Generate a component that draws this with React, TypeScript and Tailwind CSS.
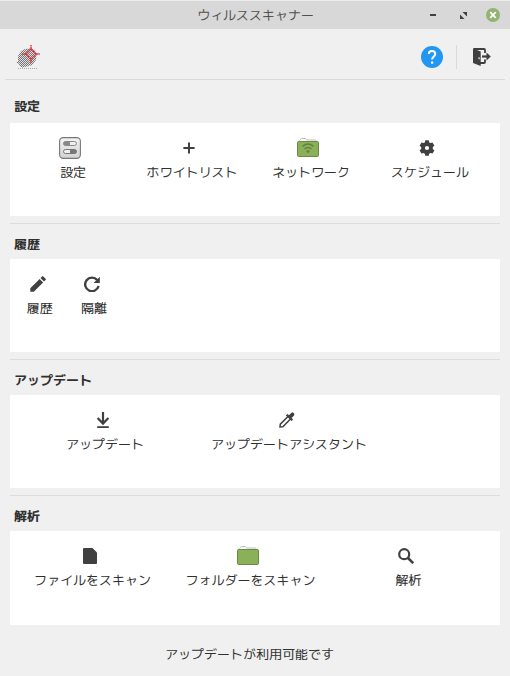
import type { ReactNode } from "react";

const Svg = ({ children, size = 16 }: { children: ReactNode; size?: number }) => (
  <svg width={size} height={size} viewBox={`0 0 ${size} ${size}`} fill="none" className="block shrink-0">
    {children}
  </svg>
);

const LogoIcon = () => (
  <Svg size={24}>
    <defs>
      <pattern id="checker" width="2" height="2" patternUnits="userSpaceOnUse">
        <path d="M0 0h1v1H0zM1 1h1v1H1z" fill="#777" shapeRendering="crispEdges" />
      </pattern>
    </defs>
    <path d="M5 6 9 4 14 3.5 19 5 20.5 10 20 15 16 20 11 21.5 6 22.5 4 21 2 18 0 18 2 16 2 11Z" fill="#dedede" />
    <path d="M5 6 9 4 14 3.5 19 5 20.5 10 20 15 16 20 11 21.5 6 22.5 4 21 2 18 0 18 2 16 2 11Z" fill="url(#checker)" />
    <path d="M2 23.5h19" stroke="#aaa" strokeDasharray="1 1" />
    <path d="m15 3.8 5.2 5.2-5.2 5.2L9.8 9Z" stroke="#e0303a" strokeWidth="1.4" strokeDasharray="2.4 .5" />
    <path d="M15 0v5M15 13v5M6 9h5M19 9h5" stroke="#e0303a" strokeWidth="1.4" strokeDasharray="1.6 .5" />
  </Svg>
);

const HelpIcon = () => (
  <Svg size={22}>
    <circle cx="11" cy="11" r="11" fill="#2196f3" />
    <path d="M7.8 8.1C7.8 6 9.1 4.9 11 4.9s3.2 1.2 3.2 3c0 2.5-3.1 2.7-3.1 5.6" stroke="#fff" strokeWidth="2" />
    <path d="M10 15.5h2.2v2.2H10z" fill="#fff" />
  </Svg>
);

const ExitIcon = () => (
  <Svg size={18}>
    <path d="M.5 1H11q1 0 1 1v3M12 11.5V14q0 1-1 1H7" stroke="#3f3f3f" strokeWidth="1.8" />
    <path d="M0 .5l7.7 3V18L0 15z" fill="#3f3f3f" />
    <path d="M9 8.5h6" stroke="#3f3f3f" strokeWidth="2.2" />
    <path d="m13.5 4.4 4.3 4.1-4.3 4.1z" fill="#3f3f3f" />
    <path d="M5.5 9.3h1.2v2H5.5z" fill="#eee" />
  </Svg>
);

const SwitchesIcon = () => (
  <Svg size={22}>
    <defs>
      <linearGradient id="plate" x2="0" y2="1">
        <stop stopColor="#f3f3f3" />
        <stop offset="1" stopColor="#d2d2d2" />
      </linearGradient>
    </defs>
    <rect x=".6" y=".6" width="20.8" height="20.8" rx="3.6" fill="url(#plate)" stroke="#777" strokeWidth="1.1" />
    <rect x="4.5" y="4.5" width="13" height="4" rx="2" fill="#eee" stroke="#888" />
    <path d="M6.5 4.5H11v4H6.5a2 2 0 0 1 0-4Z" fill="#888" />
    <rect x="4.5" y="12.5" width="13" height="4" rx="2" fill="#eee" stroke="#777" />
    <path d="M11 12.5h4.5a2 2 0 0 1 0 4H11Z" fill="#777" />
  </Svg>
);

const FolderIcon = ({ wifi = false }: { wifi?: boolean }) => (
  <Svg size={22}>
    <path d="M2.5 6V3.5l1-1V2l1-.5h4l1 1V3h9l1 1v2" fill="#fff" stroke="#bdbdbd" />
    <rect x=".5" y="4.5" width="21" height="15" rx="1.2" fill="#8bb158" stroke="#6b8846" />
    {wifi && (
      <>
        <path d="M5.5 9.3q5.5-4.4 11 0M7.5 12q3.5-2.8 7 0" stroke="#638040" strokeWidth="1.5" />
        <path d="m11 16.3-2-2.3q2-1.3 4 0z" fill="#638040" />
      </>
    )}
  </Svg>
);

const PlusIcon = () => (
  <Svg>
    <path d="M8 2.4v11.2M2.4 8h11.2" stroke="#404040" strokeWidth="2" />
  </Svg>
);

const GearIcon = () => (
  <Svg>
    <path
      fillRule="evenodd"
      d="M6.3.2h3.4l.5 2.2 1.2.7 2.1-.6 1.9 3.2L13.8 7v2l1.6 1.4-1.9 3.2-2.1-.6-1.2.7-.5 2.1H6.3l-.5-2.1-1.2-.7-2.1.6-1.9-3.2L2.2 9V7L.6 5.7l1.9-3.2 2.1.6 1.2-.7zM8 5.9a2.1 2.1 0 1 0 0 4.2 2.1 2.1 0 0 0 0-4.2Z"
      fill="#404040"
    />
  </Svg>
);

const PencilIcon = () => (
  <Svg>
    <path d="m.3 12.2 9.3-9.3 3.5 3.5-9.3 9.3H.3zM10.5 2l1.6-1.6q.6-.6 1.2 0l2.3 2.3q.6.6 0 1.2L14 5.5z" fill="#404040" />
  </Svg>
);

const ReloadIcon = () => (
  <Svg>
    <path d="M13.2 4A6.8 6.8 0 1 0 14.6 10" stroke="#404040" strokeWidth="2.4" />
    <path d="M15.8.8V7H9.6z" fill="#404040" />
  </Svg>
);

const DownloadIcon = () => (
  <Svg>
    <path d="M8 0v11.5M2.6 6 8 11.6 13.4 6" stroke="#404040" strokeWidth="2.2" />
    <path d="M2.2 15.2h11.6" stroke="#404040" strokeWidth="2" />
  </Svg>
);

const PickerIcon = () => (
  <Svg>
    <path d="m9 4.5-7.7 7.7L1 15l2.8-.3L11.5 7" stroke="#404040" strokeWidth="1.5" />
    <path d="m6.8 3.4 1.6-1.5L10 3.3 12.5.7q1-.9 2.2.4t.3 2.3l-2.4 2.5L14.1 7.4l-1.5 1.6z" fill="#404040" />
  </Svg>
);

const FileIcon = () => (
  <Svg>
    <path d="M2 0h8.5L15 4.5V15q0 1-1 1H2q-1 0-1-1V1q0-1 1-1Z" fill="#404040" />
  </Svg>
);

const SearchIcon = () => (
  <Svg>
    <circle cx="6.2" cy="6.2" r="5" stroke="#404040" strokeWidth="2.2" />
    <path d="m10 10 5.2 5.2" stroke="#404040" strokeWidth="2.5" />
  </Svg>
);

type Item = { label: string; icon: ReactNode };
type Group = { title: string; cell: string; items: Item[] };

const groups: Group[] = [
  {
    title: "設定",
    cell: "w-[119px] pl-px",
    items: [
      { label: "設定", icon: <SwitchesIcon /> },
      { label: "ホワイトリスト", icon: <PlusIcon /> },
      { label: "ネットワーク", icon: <FolderIcon wifi /> },
      { label: "スケジュール", icon: <GearIcon /> },
    ],
  },
  {
    title: "履歴",
    cell: "w-[54px] pl-0.5",
    items: [
      { label: "履歴", icon: <PencilIcon /> },
      { label: "隔離", icon: <ReloadIcon /> },
    ],
  },
  {
    title: "アップデート",
    cell: "w-[184px] pl-0.5",
    items: [
      { label: "アップデート", icon: <DownloadIcon /> },
      { label: "アップデートアシスタント", icon: <PickerIcon /> },
    ],
  },
  {
    title: "解析",
    cell: "w-[158px] pl-0.5",
    items: [
      { label: "ファイルをスキャン", icon: <FileIcon /> },
      { label: "フォルダーをスキャン", icon: <FolderIcon /> },
      { label: "解析", icon: <SearchIcon /> },
    ],
  },
];

const IconCell = ({ item, cell, labelMargin }: { item: Item; cell: string; labelMargin: string }) => (
  <button className={`flex shrink-0 flex-col items-center ${cell}`}>
    <span className="flex h-[22px] items-center">{item.icon}</span>
    <span className={`mt-[3px] leading-5 whitespace-nowrap ${labelMargin}`}>{item.label}</span>
  </button>
);

const Section = ({ group, first, last }: { group: Group; first: boolean; last: boolean }) => (
  <section className="mx-2.5">
    <h2
      className={`flex h-[35px] items-end pl-1 leading-5 font-bold text-[#303030] ${first ? "pb-[7px]" : "pb-[5px]"}`}
    >
      {group.title}
    </h2>
    <div className={`flex bg-white pt-3.5 ${last ? "h-[94px]" : "h-[93px]"}`}>
      {group.items.map((item) => (
        <IconCell
          key={item.label}
          item={item}
          cell={group.cell}
          labelMargin={first ? "ml-1.5" : last ? "ml-[5px]" : "ml-1"}
        />
      ))}
    </div>
    {!last && <div className="mt-[7px] h-px bg-[#dcdcdc]" />}
  </section>
);

const TitleBar = () => (
  <header className="grid h-[29px] grid-cols-[1fr_auto_1fr] items-center border-t border-[#ededed] bg-[#d8d8d8] text-[#505050]">
    <span />
    <h1 className="pt-px pl-px">ウィルススキャナー</h1>
    <div className="flex items-center justify-end gap-[23px] pr-2.5">
      <span className="mr-px h-0.5 w-1.5 bg-[#404040]" />
      <svg width="7" height="7" viewBox="0 0 7 7" fill="#404040">
        <path d="M2.5 0H7v4.5zM0 2.5V7h4.5z" />
        <path d="M0 0 7 7" stroke="#d8d8d8" strokeWidth="1.6" />
      </svg>
      <svg width="14" height="14" viewBox="0 0 14 14" className="-ml-[4px]">
        <circle cx="7" cy="7" r="7" fill="#92b372" />
        <path d="m4.2 4.2 5.6 5.6m0-5.6L4.2 9.8" stroke="#fff" strokeWidth="1.8" />
      </svg>
    </div>
  </header>
);

export default function App() {
  return (
    <div className="flex h-[676px] w-[510px] flex-col overflow-hidden bg-[#f0f0f0] font-['M_PLUS_1p','Noto_Sans_CJK_JP',sans-serif] text-[13px] text-[#303030]">
      <TitleBar />
      <div className="mx-[5px] flex h-[51px] items-center border-b border-[#d9d9d9] pt-1.5 pr-3.5 pl-[11px]">
        <LogoIcon />
        <div className="ml-auto flex items-center">
          <HelpIcon />
          <div className="mx-[13px] h-6 w-px bg-[#d9d9d9]" />
          <div className="ml-[3px]">
            <ExitIcon />
          </div>
        </div>
      </div>
      <main className="pt-2">
        {groups.map((group, i) => (
          <Section key={group.title} group={group} first={i === 0} last={i === groups.length - 1} />
        ))}
      </main>
      <footer className="flex flex-1 items-center justify-center pt-2 pr-[11px]">アップデートが利用可能です</footer>
    </div>
  );
}
